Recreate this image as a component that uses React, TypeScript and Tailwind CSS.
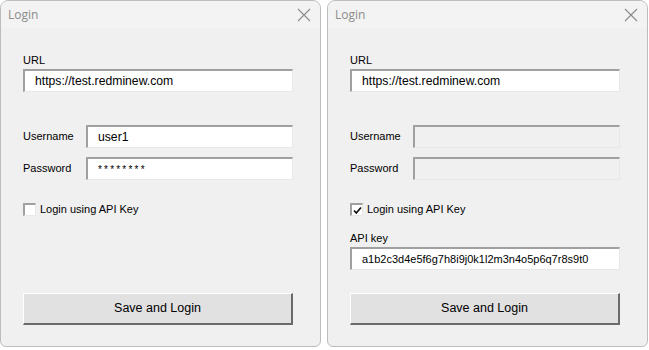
import React from 'react';

const font = { fontFamily: '"Liberation Sans", Arial, sans-serif' };

function CloseIcon() {
  return (
    <svg width="14" height="14" viewBox="0 0 14 14" className="text-[#8a8a8a]">
      <path d="M1 1 L13 13 M13 1 L1 13" stroke="currentColor" strokeWidth="1.1" fill="none" />
    </svg>
  );
}

function Field({ value, disabled, className = '', textClass = 'text-[12.2px]' }: { value?: string; disabled?: boolean; className?: string; textClass?: string }) {
  return (
    <div
      className={`h-[23px] flex items-center pl-[10px] border-t-2 border-l-2 border-t-[#a0a0a0] border-l-[#a0a0a0] border-b border-r border-b-[#e8e8e8] border-r-[#e8e8e8] ${
        disabled ? 'bg-[#f0f0f0]' : 'bg-white'
      } ${className}`}
    >
      <span className={`text-black leading-none ${textClass}`}>{value}</span>
    </div>
  );
}

function Checkbox({ checked }: { checked: boolean }) {
  return (
    <div className="flex items-center h-[13px]">
      <div className="w-[13px] h-[13px] bg-white border-t-2 border-l-2 border-t-[#a0a0a0] border-l-[#a0a0a0] border-b border-r border-b-[#e8e8e8] border-r-[#e8e8e8] flex items-center justify-center">
        {checked && (
          <svg width="9" height="9" viewBox="0 0 9 9">
            <path d="M1 4.5 L3.3 7 L8 1.5" stroke="#111" strokeWidth="1.7" fill="none" />
          </svg>
        )}
      </div>
      <span className="ml-[4px] text-[11px] text-black">Login using API Key</span>
    </div>
  );
}

function LoginWindow({ api }: { api: boolean }) {
  return (
    <div className="h-[347px] w-[321px] flex flex-col rounded-t-[8px] rounded-b-[6px] border border-[#bdbdbd] bg-[#f0f0f0] overflow-hidden">
      <div className="h-[27px] bg-[#f3f3f3] flex items-center justify-between pl-[7px] pr-[9px]">
        <span className="text-[12px] text-[#8c8c8c]" style={{ fontFamily: '"Open Sans", "Noto Sans", sans-serif' }}>
          Login
        </span>
        <CloseIcon />
      </div>
      <div className="flex-1 flex flex-col pl-[22px] pr-[27px] pb-[21px]">
        <div className="mt-[25px] h-[14px] text-[11px] leading-[14px] text-black">URL</div>
        <Field value="https://test.redminew.com" className="mt-[2px]" />
        <div className="mt-[33px] flex items-center">
          <span className="w-[63px] text-[11px] text-black">Username</span>
          <Field value={api ? '' : 'user1'} disabled={api} className="flex-1" />
        </div>
        <div className="mt-[9px] flex items-center">
          <span className="w-[63px] text-[11px] text-black">Password</span>
          <Field
            value={api ? '' : '********'}
            disabled={api}
            className="flex-1"
            textClass="text-[10px] tracking-[2.2px] pt-[2px]"
          />
        </div>
        <div className="mt-[23px]">
          <Checkbox checked={api} />
        </div>
        {api && (
          <>
            <div className="mt-[15px] h-[14px] text-[11px] leading-[14px] text-black">API key</div>
            <Field value="a1b2c3d4e5f6g7h8i9j0k1l2m3n4o5p6q7r8s9t0" className="mt-[2px]" textClass="text-[11px]" />
          </>
        )}
        <div className="flex-1" />
        <button className="h-[32px] w-full bg-[#e1e1e1] border-t border-l border-t-white border-l-white border-b-2 border-r-2 border-b-[#6b6b6b] border-r-[#6b6b6b] text-[12.5px] text-black">
          Save and Login
        </button>
      </div>
    </div>
  );
}

export default function App() {
  return (
    <div className="w-[649px] h-[350px] bg-white flex gap-[6px]" style={font}>
      <LoginWindow api={false} />
      <LoginWindow api={true} />
    </div>
  );
}
